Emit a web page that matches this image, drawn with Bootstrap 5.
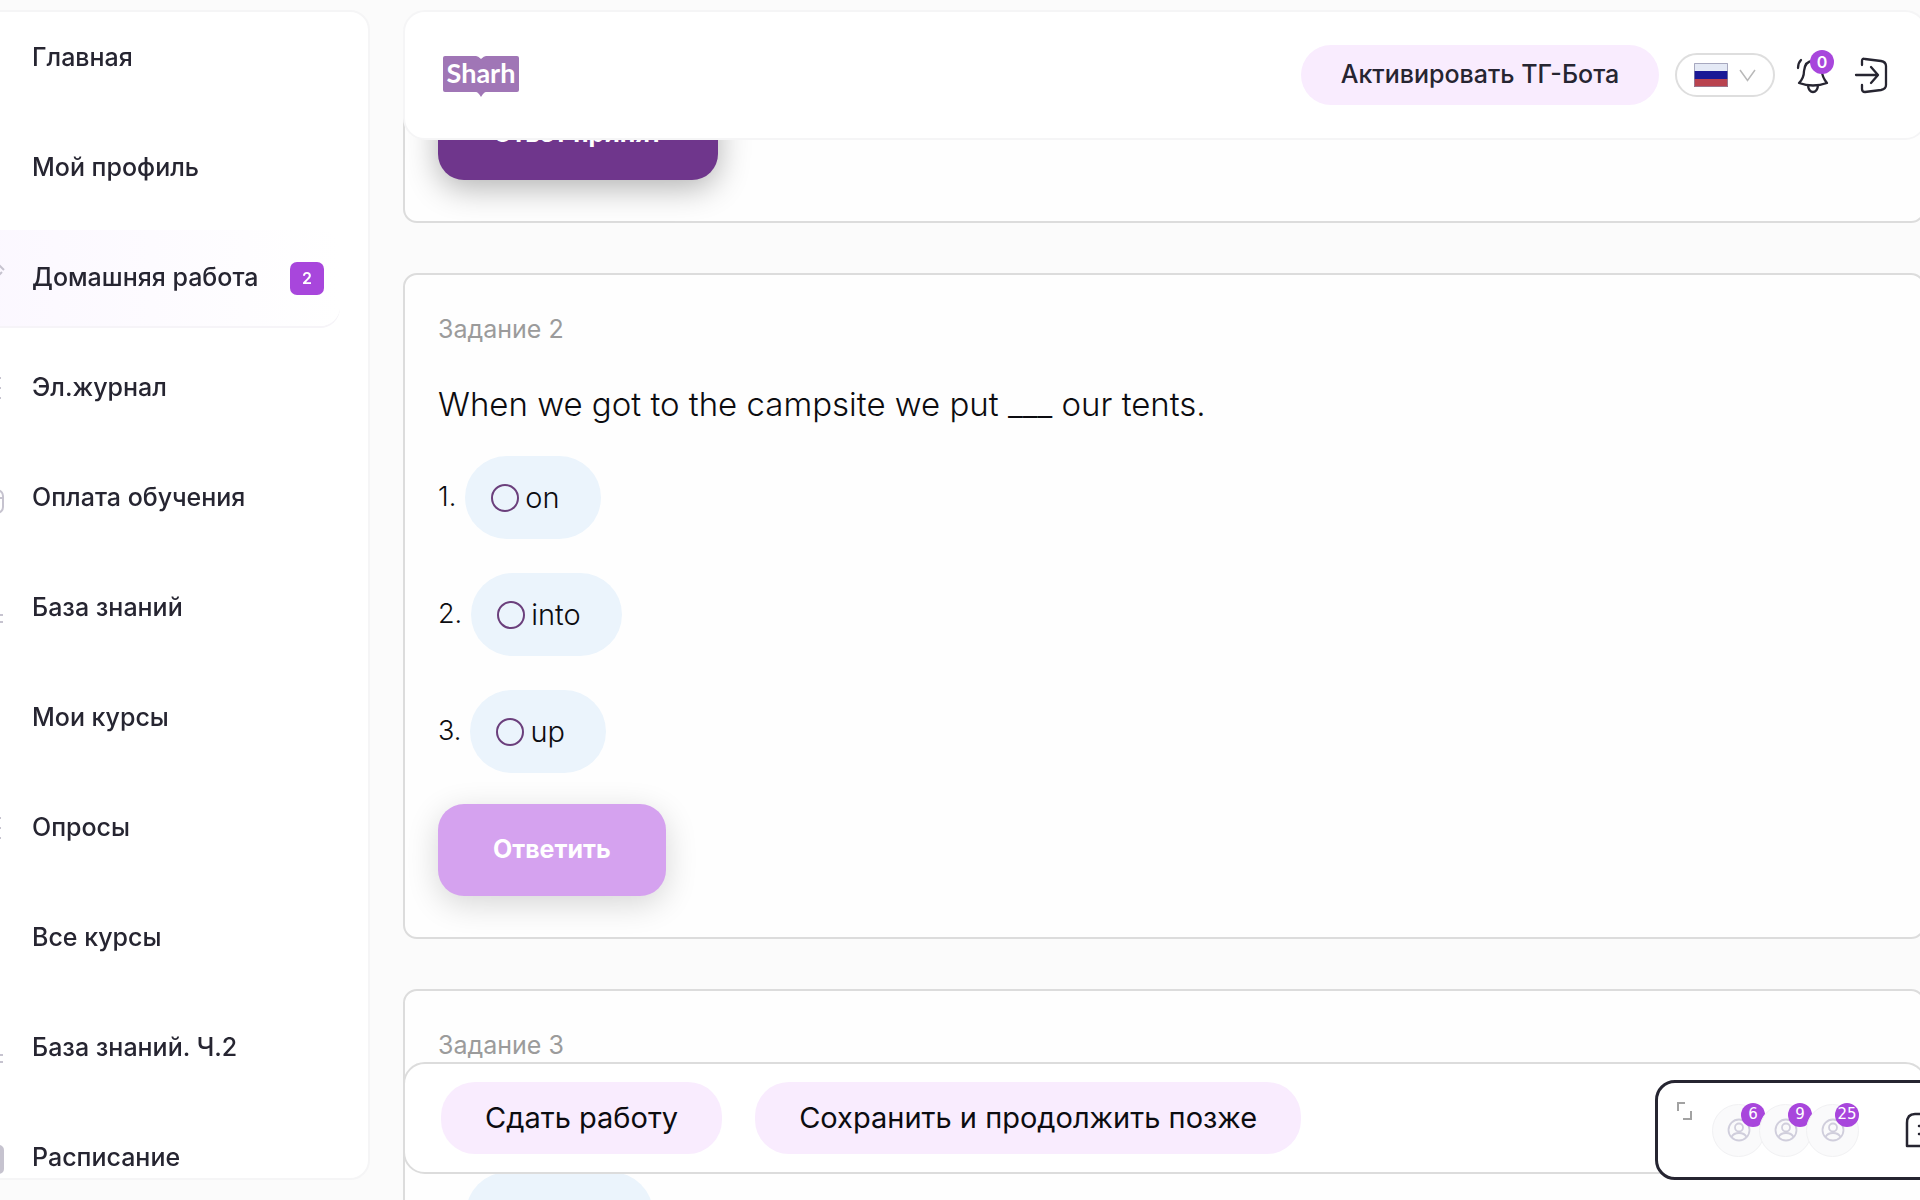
<!DOCTYPE html>
<html lang="ru">
<head>
<meta charset="utf-8">
<meta name="viewport" content="width=device-width, initial-scale=1">
<title>Sharh — Домашняя работа</title>
<link href="https://cdn.jsdelivr.net/npm/bootstrap@5.3.0/dist/css/bootstrap.min.css" rel="stylesheet">
<style>
  :root { --ink: #262531; --violet: #a846dc; --lilac: #f9ecfe; --line: #dcdcdc; --soft: #f5f5f6; }
  body { background: #fbfbfb; font-family: Inter, "Noto Sans", sans-serif; color: #0c0c10; height: 100vh; overflow: hidden; }
  .side-panel { top: 10px; bottom: 20px; left: -40px; width: 410px; background: #fff; border: 2px solid var(--soft); border-radius: 20px; overflow: hidden; z-index: 10; }
  .side-list { margin-top: -2px; }
  .side-link { height: 96px; margin: 0 28px 14px 0; padding: 0 16px 0 11px; border-radius: 0 20px 20px 0; color: var(--ink); font-size: 25px; font-weight: 500; text-decoration: none; gap: 27px; white-space: nowrap; flex-shrink: 0; }
  .side-link svg { width: 32px; height: 32px; flex: none; fill: none; stroke: #c6c3cf; stroke-width: 2; }
  .side-link.active { background: linear-gradient(90deg, #fbf7ff, #fff); box-shadow: 0 2px 0 #f6f4f8; }
  .count-tag { width: 34px; height: 33px; border-radius: 7px; background: var(--violet); font-size: 16px; font-weight: 600; }
  .work-area { height: 100%; overflow: hidden; padding: 48px 0 0 403px; margin-right: -5px; }
  .top-panel { top: 10px; left: 403px; right: -7px; height: 130px; padding: 0 36px; background: #fff; border: 2px solid var(--soft); border-radius: 22px; z-index: 20; }
  .brand-logo { width: 80px; height: 46px; }
  .soft-btn { background: var(--lilac); border: 0; white-space: nowrap; }
  .bot-btn { height: 60px; width: 358px; border-radius: 30px; font-size: 25px; font-weight: 500; color: var(--ink); }
  .lang-btn { width: 100px; height: 44px; border: 2px solid #dedede; border-radius: 22px; background: #fff; gap: 11px; margin-right: 20px; }
  .icon-btn { background: none; border: 0; padding: 0; width: 36px; height: 40px; }
  .icon-btn.bell { margin-right: 22px; }
  .alert-count { top: -5px; right: -3px; width: 24px; height: 24px; background: var(--violet); font-size: 16px; font-weight: 600; }
  .task-card { background: #fefefe; border: 2px solid var(--line); border-radius: 14px; margin-bottom: 50px; padding: 38px 34px 41px 33px; }
  .task-title { font-size: 25px; line-height: 32px; color: #9b9b9b; margin-bottom: 38px; font-weight: 400; }
  .task-text { font-size: 33px; line-height: 42px; margin-bottom: 31px; font-weight: 300; }
  .answer-row { font-size: 27px; gap: 9px; margin-bottom: 34px; font-weight: 300; }
  .answer-row.final { margin-bottom: 31px; }
  .answer-pill { height: 83px; padding: 0 41px 0 26px; border-radius: 42px; background: #ebf4fc; gap: 6px; font-size: 29px; }
  .answer-pill.wide { width: 187px; margin-left: 28px; }
  .answer-pill input { appearance: none; width: 28px; height: 28px; margin: 0; border: 2px solid #6b3f7c; border-radius: 50%; background: transparent; }
  .reply-btn { height: 92px; padding: 0 55px; border: 0; border-radius: 26px; font-size: 25px; font-weight: 700; color: #fff; background: #d5a2ef; box-shadow: 0 8px 32px rgba(0,0,0,.16); }
  .reply-btn.sent { background: #6f368c; box-shadow: 0 8px 32px rgba(0,0,0,.3); }
  .bottom-panel { left: 403px; right: -7px; bottom: 26px; height: 112px; padding: 0 36px; gap: 33px; background: #fff; border: 2px solid var(--line); border-radius: 22px; z-index: 20; }
  .bottom-panel .soft-btn { height: 72px; padding: 0 44px; border-radius: 34px; font-size: 29px; color: #0c0c10; }
  .chat-panel { left: calc(100% - 265px); right: -120px; bottom: 20px; height: 100px; border: 3px solid var(--ink); border-radius: 20px; background: #fff; z-index: 30; padding-left: 19px; }
  .expand-btn { border: 0; padding: 0; background: none; line-height: 0; margin: 19px 20px 0 0; }
  .person { width: 53px; height: 53px; background: #fafafb; border: 1px solid #f1f1f3; margin-right: -6px; }
  .person-count { top: -2px; right: -1px; width: 24px; height: 24px; background: var(--violet); font-family: "DejaVu Sans", sans-serif; font-size: 15px; }
  .note-btn { border: 0; padding: 0; background: none; line-height: 0; margin-left: 52px; }
</style>
</head>
<body>
<aside class="side-panel position-fixed">
  <nav class="side-list d-flex flex-column">
    <a class="side-link d-flex align-items-center" href="#"><svg viewBox="0 0 32 32"></svg>Главная</a>
    <a class="side-link d-flex align-items-center" href="#"><svg viewBox="0 0 32 32"></svg>Мой профиль</a>
    <a class="side-link active d-flex align-items-center" href="#"><svg viewBox="0 0 32 32"><path d="M24 1l7 7M26 13l3-3M24 1L4 20v8h8l12-13"/></svg><span>Домашняя работа</span><span class="count-tag ms-auto text-white d-flex align-items-center justify-content-center">2</span></a>
    <a class="side-link d-flex align-items-center" href="#"><svg viewBox="0 0 32 32"><path d="M8 6h20M8 16h20M8 26h20"/></svg>Эл.журнал</a>
    <a class="side-link d-flex align-items-center" href="#"><svg viewBox="0 0 32 32"><rect x="2" y="8" width="28" height="23" rx="6"/><path d="M2 16h28"/></svg>Оплата обучения</a>
    <a class="side-link d-flex align-items-center" href="#"><svg viewBox="0 0 32 32"><path d="M10 23h20M10 30h20"/></svg>База знаний</a>
    <a class="side-link d-flex align-items-center" href="#"><svg viewBox="0 0 32 32"></svg>Мои курсы</a>
    <a class="side-link d-flex align-items-center" href="#"><svg viewBox="0 0 32 32"><path d="M8 6h20M8 16h20M8 26h20"/></svg>Опросы</a>
    <a class="side-link d-flex align-items-center" href="#"><svg viewBox="0 0 32 32"></svg>Все курсы</a>
    <a class="side-link d-flex align-items-center" href="#"><svg viewBox="0 0 32 32"><path d="M10 23h20M10 30h20"/></svg>База знаний. Ч.2</a>
    <a class="side-link d-flex align-items-center" href="#"><svg viewBox="0 0 32 32"><rect x="2" y="4" width="28" height="27" rx="4" fill="#c6c3cf"/></svg>Расписание</a>
  </nav>
</aside>

<header class="top-panel position-fixed d-flex align-items-center">
  <a href="#" aria-label="Sharh"><svg class="brand-logo" viewBox="0 0 80 46"><path fill="#a076b6" d="M4 4h31q2 0 5 3 3-3 5-3h31q2 0 2 2v32q0 2-2 2H45q-2 0-5 5-3-5-5-5H4q-2 0-2-2V6q0-2 2-2z"/><text x="40" y="31" text-anchor="middle" font-family="Lato, sans-serif" font-size="27" font-weight="700" fill="#fff">Sharh</text></svg></a>
  <div class="d-flex align-items-center ms-auto">
    <button class="soft-btn bot-btn me-3" type="button">Активировать ТГ-Бота</button>
    <button class="lang-btn d-flex align-items-center justify-content-center" type="button" aria-label="Русский">
      <svg width="34" height="24" viewBox="0 0 34 24"><path fill="#e4e9f5" d="M0 0h34v8H0z"/><path fill="#1a1896" d="M0 8h34v8H0z"/><path fill="#b9434f" d="M0 16h34v8H0z"/><path fill="none" stroke="#8d8ba8" stroke-opacity=".7" d="M.5.5h33v23H.5z"/></svg>
      <svg width="17" height="13" viewBox="0 0 17 13"><path d="M1 1l7.500 10.500L16 1" fill="none" stroke="#b9b9b9" stroke-width="1.500"/></svg>
    </button>
    <button class="icon-btn bell position-relative" type="button" aria-label="Уведомления">
      <svg width="36" height="40" viewBox="0 0 36 40" fill="none" stroke="#262531" stroke-width="2.300" stroke-linecap="round" stroke-linejoin="round"><path d="M3 13q0-5 3-8M9 16q1-10 9-10t9 10q0 6 5 12-14 5-28 0 5-5 5-12zM13 31q1 6 5 6t5-6"/></svg>
      <span class="alert-count position-absolute rounded-circle text-white d-flex align-items-center justify-content-center">0</span>
    </button>
    <button class="icon-btn" type="button" aria-label="Выход">
      <svg width="36" height="40" viewBox="0 0 36 40" fill="none" stroke="#262531" stroke-width="2.300" stroke-linecap="round" stroke-linejoin="round"><path d="M3 20h21M18 12l7 8-7 8M9 10V6q0-3 3-2l16 2q5 1 5 5v19q0 4-5 5l-16 2q-3 0-3-3v-4"/></svg>
    </button>
  </div>
</header>

<main class="work-area">
  <section class="task-card">
    <button class="reply-btn sent" type="button">Ответ принят</button>
  </section>
  <section class="task-card">
    <h2 class="task-title">Задание 2</h2>
    <p class="task-text">When we got to the campsite we put ___ our tents.</p>
    <div class="answer-row d-flex align-items-center"><span>1.</span><label class="answer-pill d-flex align-items-center"><input type="radio" name="task2">on</label></div>
    <div class="answer-row d-flex align-items-center"><span>2.</span><label class="answer-pill d-flex align-items-center"><input type="radio" name="task2">into</label></div>
    <div class="answer-row final d-flex align-items-center"><span>3.</span><label class="answer-pill d-flex align-items-center"><input type="radio" name="task2">up</label></div>
    <button class="reply-btn" type="button">Ответить</button>
  </section>
  <section class="task-card">
    <h2 class="task-title">Задание 3</h2>
    <p class="task-text">&nbsp;</p>
    <div class="answer-row d-flex align-items-center"><label class="answer-pill wide d-flex align-items-center"><input type="radio" name="task3" aria-label="1"></label></div>
  </section>
</main>

<div class="bottom-panel position-fixed d-flex align-items-center">
  <button class="soft-btn" type="button">Сдать работу</button>
  <button class="soft-btn" type="button">Сохранить и продолжить позже</button>
</div>

<div class="chat-panel position-fixed d-flex align-items-center">
  <button class="expand-btn align-self-start" type="button" aria-label="Развернуть"><svg width="15" height="18" viewBox="0 0 15 18" fill="none" stroke="#a2a2a2" stroke-width="2"><path d="M1 9V1h7M14 9v8H6"/></svg></button>
  <div class="person position-relative rounded-circle d-flex align-items-center justify-content-center flex-shrink-0">
    <svg width="24" height="24" viewBox="0 0 24 24" fill="none" stroke="#d0cedc" stroke-width="1.800"><circle cx="12" cy="12" r="10.500"/><circle cx="12" cy="9.500" r="4"/><path d="M4.500 19q2-4 7.500-4t7.500 4"/></svg>
    <span class="person-count position-absolute rounded-circle text-white d-flex align-items-center justify-content-center">6</span>
  </div>
  <div class="person position-relative rounded-circle d-flex align-items-center justify-content-center flex-shrink-0">
    <svg width="24" height="24" viewBox="0 0 24 24" fill="none" stroke="#d0cedc" stroke-width="1.800"><circle cx="12" cy="12" r="10.500"/><circle cx="12" cy="9.500" r="4"/><path d="M4.500 19q2-4 7.500-4t7.500 4"/></svg>
    <span class="person-count position-absolute rounded-circle text-white d-flex align-items-center justify-content-center">9</span>
  </div>
  <div class="person position-relative rounded-circle d-flex align-items-center justify-content-center flex-shrink-0">
    <svg width="24" height="24" viewBox="0 0 24 24" fill="none" stroke="#d0cedc" stroke-width="1.800"><circle cx="12" cy="12" r="10.500"/><circle cx="12" cy="9.500" r="4"/><path d="M4.500 19q2-4 7.500-4t7.500 4"/></svg>
    <span class="person-count position-absolute rounded-circle text-white d-flex align-items-center justify-content-center">25</span>
  </div>
  <button class="note-btn" type="button" aria-label="Сообщения"><svg width="36" height="36" viewBox="0 0 36 36" fill="none" stroke="#262531" stroke-width="2.500" stroke-linecap="round" stroke-linejoin="round"><path d="M10 2h16q8 0 8 8v16q0 8-8 8H2V11q0-9 8-9zM14 14h12M14 22h9"/></svg></button>
</div>
<script src="https://cdn.jsdelivr.net/npm/bootstrap@5.3.0/dist/js/bootstrap.bundle.min.js"></script>
</body>
</html>
